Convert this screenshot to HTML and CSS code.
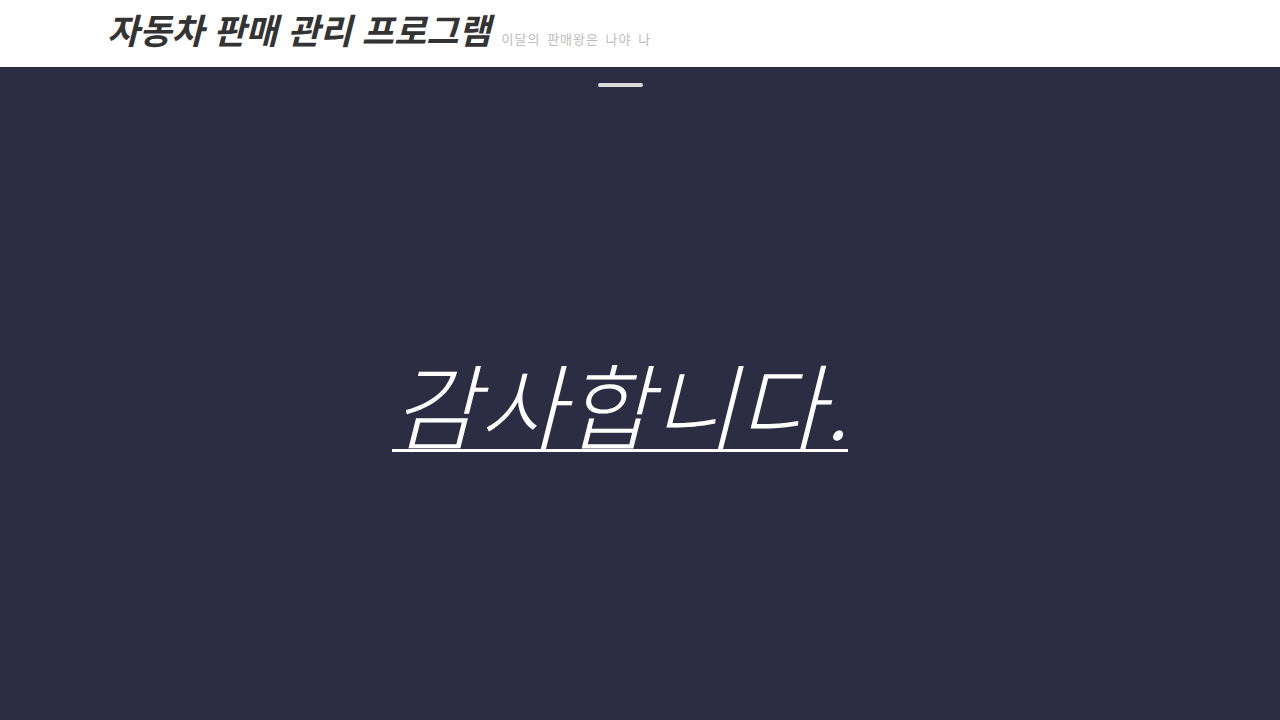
FILE: index.html
```html
<!DOCTYPE html>
<html lang="ko">
<head>
<meta charset="utf-8">
<link rel="stylesheet" href="styles.css">
</head>
<body>
<header class="topbar">
  <h1 class="title">자동차 판매 관리 프로그램</h1>
  <span class="subtitle">이달의 판매왕은 나야 나</span>
</header>
<main class="stage">
  <div class="handle"></div>
  <div class="thanks"><a class="thanks-link" href="#">감사합니다.</a></div>
</main>
</body>
</html>
```
FILE: styles.css
```css
html, body {
  margin: 0;
  padding: 0;
  height: 100%;
}
body {
  font-family: "Noto Sans CJK KR", "Noto Sans", sans-serif;
  background: #2c2c42;
  display: flex;
  flex-direction: column;
}
.topbar {
  height: 67px;
  background: #ffffff;
  display: flex;
  align-items: flex-end;
  padding-left: 107px;
  box-sizing: border-box;
  gap: 11px;
  padding-bottom: 21px;
}
.title {
  margin: 0;
  font-size: 35px;
  font-weight: 700;
  font-style: italic;
  color: #333;
  line-height: 1;
  letter-spacing: 0;
}
.subtitle {
  font-size: 13px;
  color: #bdbdbd;
  line-height: 1;
  letter-spacing: 1px;
  word-spacing: 2px;
  margin-bottom: 1px;
}
.stage {
  flex: 1;
  display: flex;
  flex-direction: column;
  align-items: center;
  padding-right: 40px;
}
.handle {
  width: 45px;
  height: 4px;
  border-radius: 2px;
  background: #dcdcdc;
  margin-top: 16px;
}
.thanks {
  margin-top: 268px;
}
.thanks-link {
  color: #ffffff;
  font-size: 94px;
  font-weight: 300;
  font-style: italic;
  text-decoration: underline;
  text-decoration-thickness: 3px;
  text-underline-offset: 6px;
  line-height: 1;
}
```
